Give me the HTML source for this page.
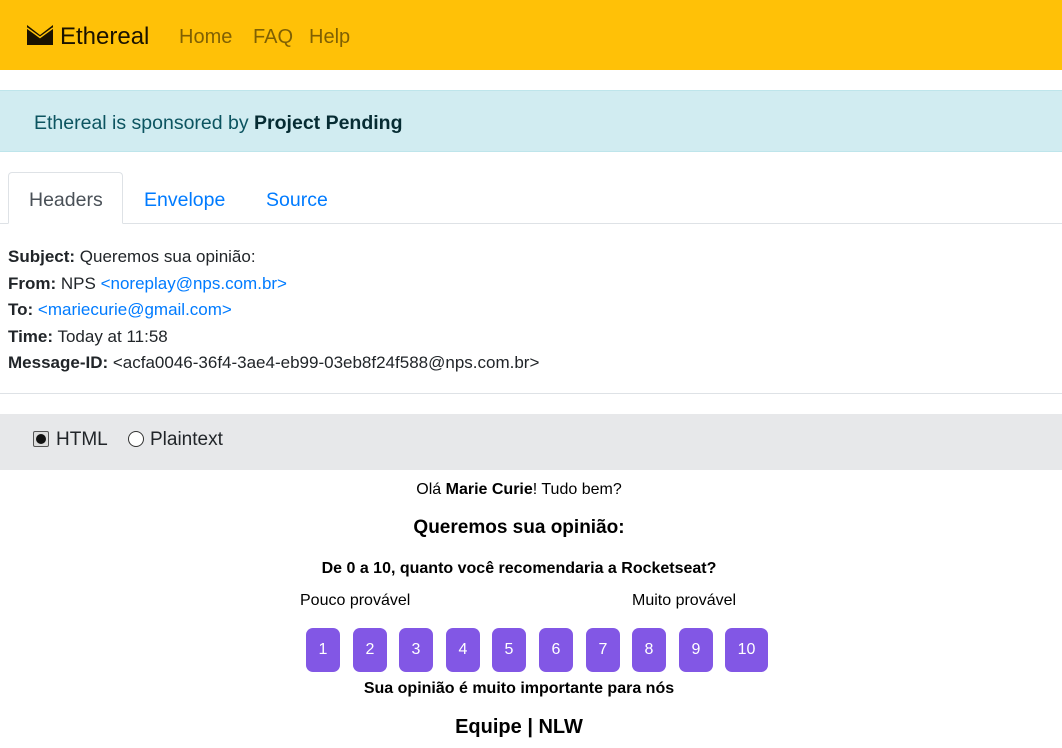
<!DOCTYPE html>
<html><head><meta charset="utf-8"><style>
*{margin:0;padding:0;box-sizing:border-box}
body{width:1062px;height:748px;overflow:hidden;background:#fff;font-family:"Liberation Sans",sans-serif;position:relative;color:#212529}
.a{position:absolute;white-space:nowrap}
.nav{position:absolute;left:0;top:0;width:1062px;height:70px;background:#ffc107}
.sp{position:absolute;left:0;top:90px;width:1062px;height:62px;background:#d1ecf1;border-top:1px solid #bee5eb;border-bottom:1px solid #bee5eb}
.tabline{position:absolute;left:0;top:223px;width:1062px;border-top:1px solid #dee2e6}
.tab{position:absolute;left:8px;top:172px;width:115px;height:52px;border:1px solid #dee2e6;border-bottom:1px solid #fff;border-radius:4px 4px 0 0;background:#fff}
.hd{font-size:17px;line-height:26.5px;color:#212529}
.hd b{font-weight:bold}
.bl{color:#007bff}
.bar{position:absolute;left:0;top:414px;width:1062px;height:56px;background:#e7e8ea}
.btn{position:absolute;top:628px;height:44px;background:#8257e5;border-radius:7px;color:#fff;font-size:16px;text-align:center;line-height:44px}
.c{position:absolute;left:0;width:1038px;text-align:center;color:#000}
</style></head><body>
<div class="nav"></div>
<svg class="a" style="left:27px;top:25px" width="26" height="20" viewBox="0 0 26 20"><rect x="0" y="0" width="26" height="20" fill="#1a1200"/><path d="M0 0 L13 10 L26 0" fill="#ffc107"/><path d="M0 3 L13 12.5 L26 3" fill="none" stroke="#ffc107" stroke-width="1.5"/></svg>
<div class="a" style="left:60px;top:23px;font-size:24px;color:#1a1200">Ethereal</div>
<div class="a" style="left:179px;top:26px;font-size:20px;color:rgba(0,0,0,.5)">Home</div>
<div class="a" style="left:253px;top:26px;font-size:20px;color:rgba(0,0,0,.5)">FAQ</div>
<div class="a" style="left:309px;top:26px;font-size:20px;color:rgba(0,0,0,.5)">Help</div>
<div class="sp"></div>
<div class="a" style="left:34px;top:112px;font-size:19.5px;color:#0c5460">Ethereal is sponsored by <b style="color:#062c33">Project Pending</b></div>
<div class="tabline"></div>
<div class="tab"></div>
<div class="a" style="left:29px;top:189px;font-size:19.5px;color:#495057">Headers</div>
<div class="a bl" style="left:144px;top:189px;font-size:19.5px">Envelope</div>
<div class="a bl" style="left:266px;top:189px;font-size:19.5px">Source</div>
<div class="a hd" style="left:8px;top:244px">
<div><b>Subject:</b> Queremos sua opinião:</div>
<div><b>From:</b> NPS <span class="bl">&lt;noreplay@nps.com.br&gt;</span></div>
<div><b>To:</b> <span class="bl">&lt;mariecurie@gmail.com&gt;</span></div>
<div><b>Time:</b> Today at 11:58</div>
<div><b>Message-ID:</b> &lt;acfa0046-36f4-3ae4-eb99-03eb8f24f588@nps.com.br&gt;</div>
</div>
<div class="a" style="left:0;top:393px;width:1062px;border-top:1px solid #dee2e6"></div>
<div class="bar"></div>
<div class="a" style="left:33px;top:431px;width:16px;height:16px;border:1px solid #555;background:#ddd;border-radius:2px"></div>
<div class="a" style="left:36px;top:434px;width:10px;height:10px;border-radius:50%;background:#111"></div>
<div class="a" style="left:56px;top:429px;font-size:19px">HTML</div>
<div class="a" style="left:128px;top:431px;width:16px;height:16px;border:1px solid #333;border-radius:50%;background:#fff"></div>
<div class="a" style="left:150px;top:429px;font-size:19px">Plaintext</div>
<div class="c" style="top:481px;font-size:16px">Olá <b>Marie Curie</b>! Tudo bem?</div>
<div class="c" style="top:517px;font-size:19px;font-weight:bold">Queremos sua opinião:</div>
<div class="c" style="top:560px;font-size:16px;font-weight:bold">De 0 a 10, quanto você recomendaria a Rocketseat?</div>
<div class="a" style="left:300px;top:592px;font-size:16px;color:#000">Pouco provável</div>
<div class="a" style="left:632px;top:592px;font-size:16px;color:#000">Muito provável</div>
<div class="btn" style="left:306px;width:34px">1</div>
<div class="btn" style="left:353px;width:34px">2</div>
<div class="btn" style="left:399px;width:34px">3</div>
<div class="btn" style="left:446px;width:34px">4</div>
<div class="btn" style="left:492px;width:34px">5</div>
<div class="btn" style="left:539px;width:34px">6</div>
<div class="btn" style="left:586px;width:34px">7</div>
<div class="btn" style="left:632px;width:34px">8</div>
<div class="btn" style="left:679px;width:34px">9</div>
<div class="btn" style="left:725px;width:43px">10</div>
<div class="c" style="top:680px;font-size:16px;font-weight:bold">Sua opinião é muito importante para nós</div>
<div class="c" style="top:716px;font-size:20px;font-weight:bold">Equipe | NLW</div>
</body></html>
